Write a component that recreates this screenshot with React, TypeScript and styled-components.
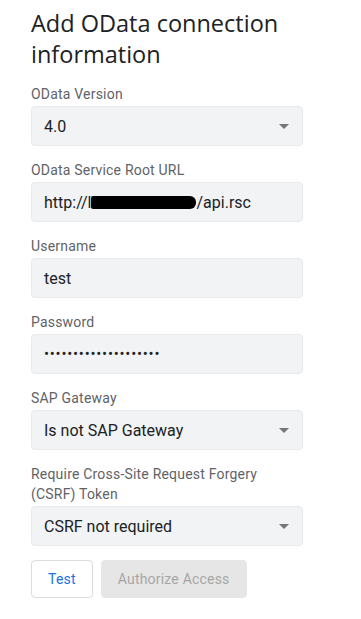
import React from 'react';
import styled, { createGlobalStyle } from 'styled-components';

const Global = createGlobalStyle`
  body {
    margin: 0;
    background: #ffffff;
    font-family: Roboto, "Liberation Sans", Arial, sans-serif;
  }
`;

const Page = styled.div`
  padding: 8px 31px 20px 31px;
  width: 272px;
`;

const Title = styled.h1`
  margin: 0 0 14px 0;
  font-family: "Open Sans", Roboto, sans-serif;
  font-weight: 400;
  font-size: 23.5px;
  line-height: 31px;
  color: #202124;
`;

const Field = styled.div`
  display: flex;
  flex-direction: column;
  margin-bottom: 14px;
`;

const Label = styled.label`
  font-size: 14px;
  line-height: 20px;
  letter-spacing: 0.2px;
  color: #5f6368;
  margin-bottom: 2px;
`;

const Box = styled.div`
  height: 40px;
  box-sizing: border-box;
  background: #f1f3f4;
  border: 1px solid #e8eaed;
  border-radius: 4px;
  padding: 0 12px;
  display: flex;
  align-items: center;
  justify-content: space-between;
  font-size: 16px;
  color: #202124;
`;

const Value = styled.span`
  white-space: nowrap;
`;

const Dots = styled.span`
  font-size: 15px;
  letter-spacing: 0.75px;
`;

// black redaction bar over part of the host name
const Redact = styled.span`
  display: inline-block;
  width: 105px;
  height: 13px;
  background: #000;
  border-radius: 2px 6px 6px 2px;
  vertical-align: -1px;
`;

const Caret = styled.span`
  width: 0;
  height: 0;
  border-left: 5px solid transparent;
  border-right: 5px solid transparent;
  border-top: 5px solid #757575;
  margin-right: 1px;
`;

const Buttons = styled.div`
  display: flex;
  gap: 8px;
  margin-top: 2px;
`;

const Button = styled.button<{ $disabled?: boolean }>`
  height: 38px;
  box-sizing: border-box;
  border-radius: 4px;
  font-family: Roboto, sans-serif;
  font-size: 14px;
  letter-spacing: 0.2px;
  padding: 0 16px;
  border: 1px solid ${({ $disabled }) => ($disabled ? '#e6e6e6' : '#dadce0')};
  background: ${({ $disabled }) => ($disabled ? '#e6e6e6' : '#ffffff')};
  color: ${({ $disabled }) => ($disabled ? '#a6a6a6' : '#1a73e8')};
`;

function Select({ label, value }: { label: string; value: string }) {
  return (
    <Field>
      <Label>{label}</Label>
      <Box>
        <Value>{value}</Value>
        <Caret />
      </Box>
    </Field>
  );
}

export default function App(): React.JSX.Element {
  return (
    <Page>
      <Global />
      <Title>Add OData connection information</Title>
      <Select label="OData Version" value="4.0" />
      <Field>
        <Label>OData Service Root URL</Label>
        <Box>
          <Value>
            http://l<Redact />/api.rsc
          </Value>
        </Box>
      </Field>
      <Field>
        <Label>Username</Label>
        <Box>
          <Value>test</Value>
        </Box>
      </Field>
      <Field>
        <Label>Password</Label>
        <Box>
          <Dots>••••••••••••••••••••</Dots>
        </Box>
      </Field>
      <Select label="SAP Gateway" value="Is not SAP Gateway" />
      <Select
        label="Require Cross-Site Request Forgery (CSRF) Token"
        value="CSRF not required"
      />
      <Buttons>
        <Button>Test</Button>
        <Button $disabled disabled>
          Authorize Access
        </Button>
      </Buttons>
    </Page>
  );
}
